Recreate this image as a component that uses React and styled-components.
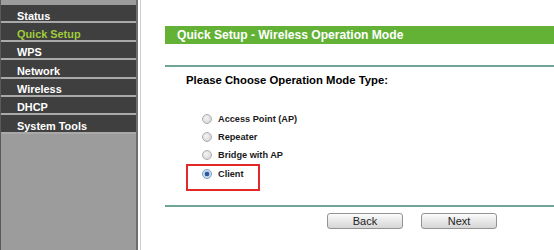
import React from "react";
import styled, { createGlobalStyle } from "styled-components";

const Global = createGlobalStyle`
  html, body { margin: 0; padding: 0; background: #fff; }
  body { font-family: "Liberation Sans", Arial, sans-serif; }
`;

const Page = styled.div`
  display: flex;
  width: 554px;
  height: 250px;
  overflow: hidden;
  background: #fff;
`;

const Sidebar = styled.nav`
  flex: 0 0 136px;
  box-sizing: border-box;
  padding-top: 5px;
  background: #9c9c9c;
  border-left: 1px solid #5a5a5a;
`;

const MenuItem = styled.div`
  box-sizing: border-box;
  height: 18.4px;
  padding: 4.6px 0 0 16px;
  display: flex;
  align-items: center;
  background: #3f3f3f;
  border-bottom: 2px solid #a9a9a9;
  color: ${(p) => (p.$active ? "#9fcd3c" : "#ffffff")};
  font-size: 10.9px;
  font-weight: bold;
  white-space: nowrap;
`;

const Divider = styled.div`
  flex: 0 0 5px;
  box-sizing: border-box;
  border-left: 2px solid #6e6e6e;
  border-right: 1px solid #cfcfcf;
  background: #fff;
`;

const Content = styled.main`
  flex: 1;
  padding: 26px 0 0 24px;
  display: flex;
  flex-direction: column;
  min-width: 0;
`;

const TitleBar = styled.div`
  height: 18px;
  display: flex;
  align-items: center;
  padding-left: 12px;
  background: #63b236;
  color: #fff;
  font-size: 12.1px;
  font-weight: bold;
  white-space: nowrap;
`;

const Rule = styled.div`
  height: 2px;
  background: #6fa596;
  margin-top: ${(p) => p.$top}px;
`;

const Prompt = styled.div`
  margin: 6px 0 0 21px;
  font-size: 11.3px;
  font-weight: bold;
  line-height: 14px;
  color: #000;
  white-space: nowrap;
`;

const Options = styled.div`
  margin: 23px 0 0 37px;
  display: flex;
  flex-direction: column;
  height: 95px;
`;

const Option = styled.label`
  position: relative;
  height: 18.2px;
  display: flex;
  align-items: center;
  gap: 6px;
  font-size: 9.2px;
  font-weight: bold;
  color: #1a1a1a;
  white-space: nowrap;
`;

const Radio = styled.span`
  width: 10px;
  height: 10px;
  box-sizing: border-box;
  border-radius: 50%;
  border: 1px solid ${(p) => (p.$checked ? "#7f9cc0" : "#adadad")};
  background: ${(p) =>
    p.$checked
      ? "radial-gradient(circle, #2a5a9a 0 2px, #bcd2ec 2.6px, #eef3fa 100%)"
      : "radial-gradient(circle at 40% 40%, #f4f4f4, #cfcfcf)"};
`;

const Highlight = styled.span`
  position: absolute;
  left: -16px;
  top: -1px;
  width: 74px;
  height: 27px;
  box-sizing: border-box;
  border: 2px solid #e3282a;
`;

const Buttons = styled.div`
  display: flex;
  gap: 18px;
  margin: 6px 0 0 162px;
`;

const Button = styled.button`
  width: 76px;
  height: 16px;
  padding: 0;
  box-sizing: border-box;
  border: 1px solid #939393;
  border-radius: 3px;
  background: linear-gradient(#fbfbfb, #e6e6e6 55%, #d6d6d6);
  font-family: "Liberation Sans", Arial, sans-serif;
  font-size: 11px;
  color: #222;
  line-height: 14px;
`;

const menu = ["Status", "Quick Setup", "WPS", "Network", "Wireless", "DHCP", "System Tools"];
const modes = ["Access Point (AP)", "Repeater", "Bridge with AP", "Client"];

export default function App() {
  return (
    <>
      <Global />
      <Page>
        <Sidebar>
          {menu.map((m) => (
            <MenuItem key={m} $active={m === "Quick Setup"}>
              {m}
            </MenuItem>
          ))}
        </Sidebar>
        <Divider />
        <Content>
          <TitleBar>Quick Setup - Wireless Operation Mode</TitleBar>
          <Rule $top={21} />
          <Prompt>Please Choose Operation Mode Type:</Prompt>
          <Options>
            {modes.map((m) => (
              <Option key={m}>
                <Radio $checked={m === "Client"} />
                {m}
                {m === "Client" && <Highlight />}
              </Option>
            ))}
          </Options>
          <Rule $top={0} />
          <Buttons>
            <Button>Back</Button>
            <Button>Next</Button>
          </Buttons>
        </Content>
      </Page>
    </>
  );
}
